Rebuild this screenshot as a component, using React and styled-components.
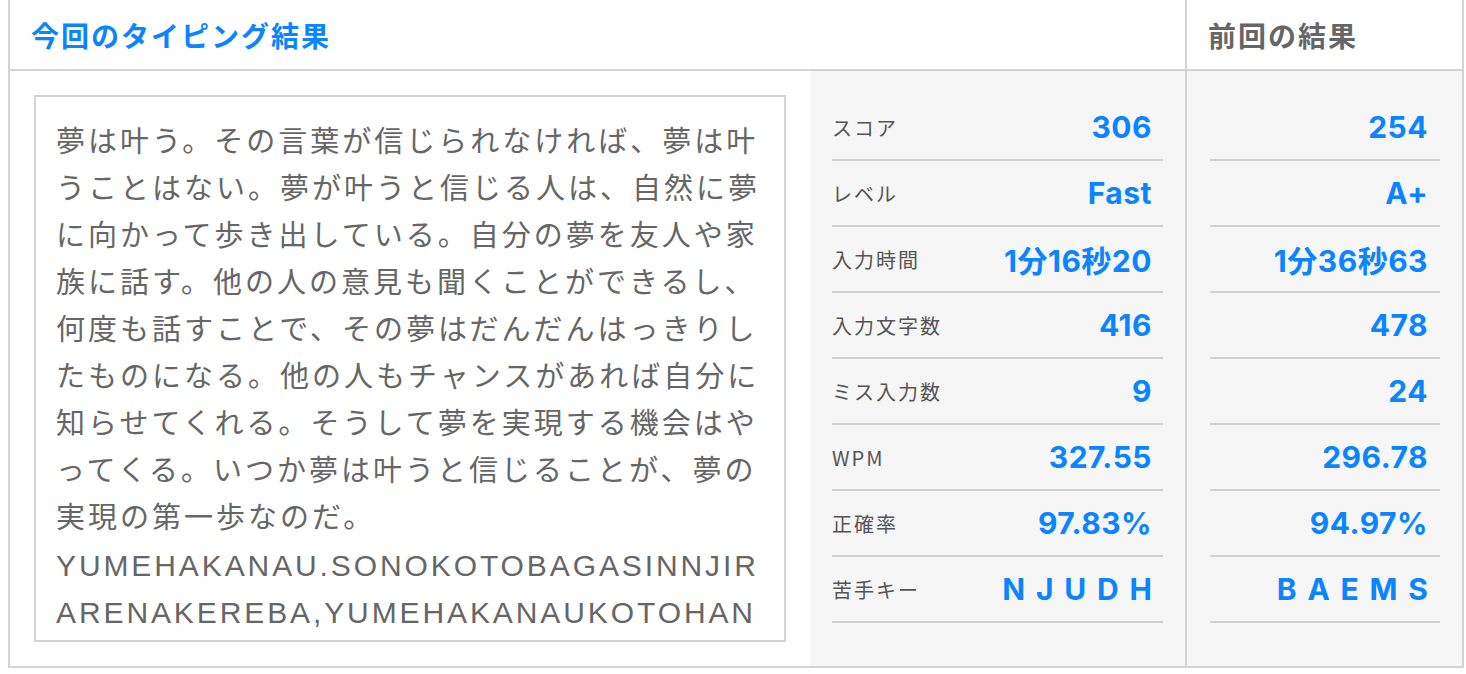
import React from 'react'
import styled, { createGlobalStyle } from 'styled-components';

const passage = [
    '夢は叶う。その言葉が信じられなければ、夢は叶',
    'うことはない。夢が叶うと信じる人は、自然に夢',
    'に向かって歩き出している。自分の夢を友人や家',
    '族に話す。他の人の意見も聞くことができるし、',
    '何度も話すことで、その夢はだんだんはっきりし',
    'たものになる。他の人もチャンスがあれば自分に',
    '知らせてくれる。そうして夢を実現する機会はや',
    'ってくる。いつか夢は叶うと信じることが、夢の',
    '実現の第一歩なのだ。',
];

const romaji = [
    'YUMEHAKANAU.SONOKOTOBAGASINNJIR',
    'ARENAKEREBA,YUMEHAKANAUKOTOHAN',
];

const stats = [
    { label: 'スコア', now: '306', prev: '254' },
    { label: 'レベル', now: 'Fast', prev: 'A+' },
    { label: '入力時間', now: '1分16秒20', prev: '1分36秒63' },
    { label: '入力文字数', now: '416', prev: '478' },
    { label: 'ミス入力数', now: '9', prev: '24' },
    { label: 'WPM', now: '327.55', prev: '296.78' },
    { label: '正確率', now: '97.83%', prev: '94.97%' },
    { label: '苦手キー', now: 'NJUDH', prev: 'BAEMS', keys: true },
];

export default function App() {
    return (
        <>
            <GlobalStyle />
            <Page>
                <Board>
                    <HeadCell>
                        <HeadTitle $color="#0a84ff">今回のタイピング結果</HeadTitle>
                    </HeadCell>
                    <HeadCell $side>
                        <HeadTitle $color="#666">前回の結果</HeadTitle>
                    </HeadCell>

                    <BodyMain>
                        <TextCell>
                            <TypedBox>
                                {passage.map((line, i) => <Line key={i}>{line}</Line>)}
                                {romaji.map((line, i) => <Line key={'r' + i} $latin>{line}</Line>)}
                            </TypedBox>
                        </TextCell>
                        <StatsPanel>
                            {stats.map(s => (
                                <StatRow key={s.label}>
                                    <Label>{s.label}</Label>
                                    <Value $keys={s.keys}>{s.now}</Value>
                                </StatRow>
                            ))}
                        </StatsPanel>
                    </BodyMain>

                    <PrevPanel>
                        {stats.map(s => (
                            <StatRow key={s.label} $end>
                                <Value $keys={s.keys}>{s.prev}</Value>
                            </StatRow>
                        ))}
                    </PrevPanel>
                </Board>
            </Page>
        </>
    )
}

const GlobalStyle = createGlobalStyle`
    body{
        margin:0;
        background:#fff;
        font-family:"Liberation Sans","Noto Sans CJK JP",sans-serif;
    }
`;

const Page = styled.div`
    padding:0 2px 6px 8px;
`;

const Board = styled.div`
    display:grid;
    grid-template-columns:1fr 277px;
    border:2px solid #d3d3d3;
    border-top:none;
`;

const HeadCell = styled.div`
    height:69px;
    display:flex;
    align-items:center;
    padding-left:21px;
    border-bottom:2px solid #d3d3d3;
    border-left:${props => props.$side ? '2px solid #d3d3d3' : 'none'};
`;

const HeadTitle = styled.h2`
    margin:0;
    font-family:"Noto Sans CJK JP",sans-serif;
    font-size:28px;
    font-weight:700;
    letter-spacing:2px;
    color:${props => props.$color};
`;

const BodyMain = styled.div`
    display:flex;
    height:595px;
`;

const TextCell = styled.div`
    flex:0 0 800px;
    box-sizing:border-box;
    padding:24px;
    background:#fff;
`;

const TypedBox = styled.div`
    height:100%;
    box-sizing:border-box;
    border:2px solid #d3d3d3;
    padding:22px 20px 0;
    overflow:hidden;
    color:#666;
`;

const Line = styled.span`
    display:block;
    white-space:nowrap;
    height:47px;
    line-height:47px;
    font-size:${props => props.$latin ? '30px' : '29px'};
    letter-spacing:${props => props.$latin ? '2.9px' : '3px'};
`;

const StatsPanel = styled.div`
    flex:1;
    background:#f6f6f6;
    padding:24px 22px;
`;

const PrevPanel = styled.div`
    background:#f6f6f6;
    border-left:2px solid #d3d3d3;
    padding:24px 22px 24px 23px;
`;

const StatRow = styled.div`
    display:flex;
    align-items:center;
    justify-content:${props => props.$end ? 'flex-end' : 'space-between'};
    height:64px;
    padding-right:${props => props.$end ? '12px' : '11px'};
    border-bottom:2px solid #d0d0d0;
`;

const Label = styled.span`
    font-family:"Noto Sans CJK JP",sans-serif;
    font-size:20px;
    letter-spacing:2px;
    color:#555;
`;

const Value = styled.span`
    font-family:Inter,"Noto Sans CJK JP",sans-serif;
    font-size:30px;
    font-weight:700;
    color:#0a84ff;
    letter-spacing:${props => props.$keys ? '10.8px' : '0.5px'};
    margin-right:${props => props.$keys ? '-10.8px' : '0'};
`;
